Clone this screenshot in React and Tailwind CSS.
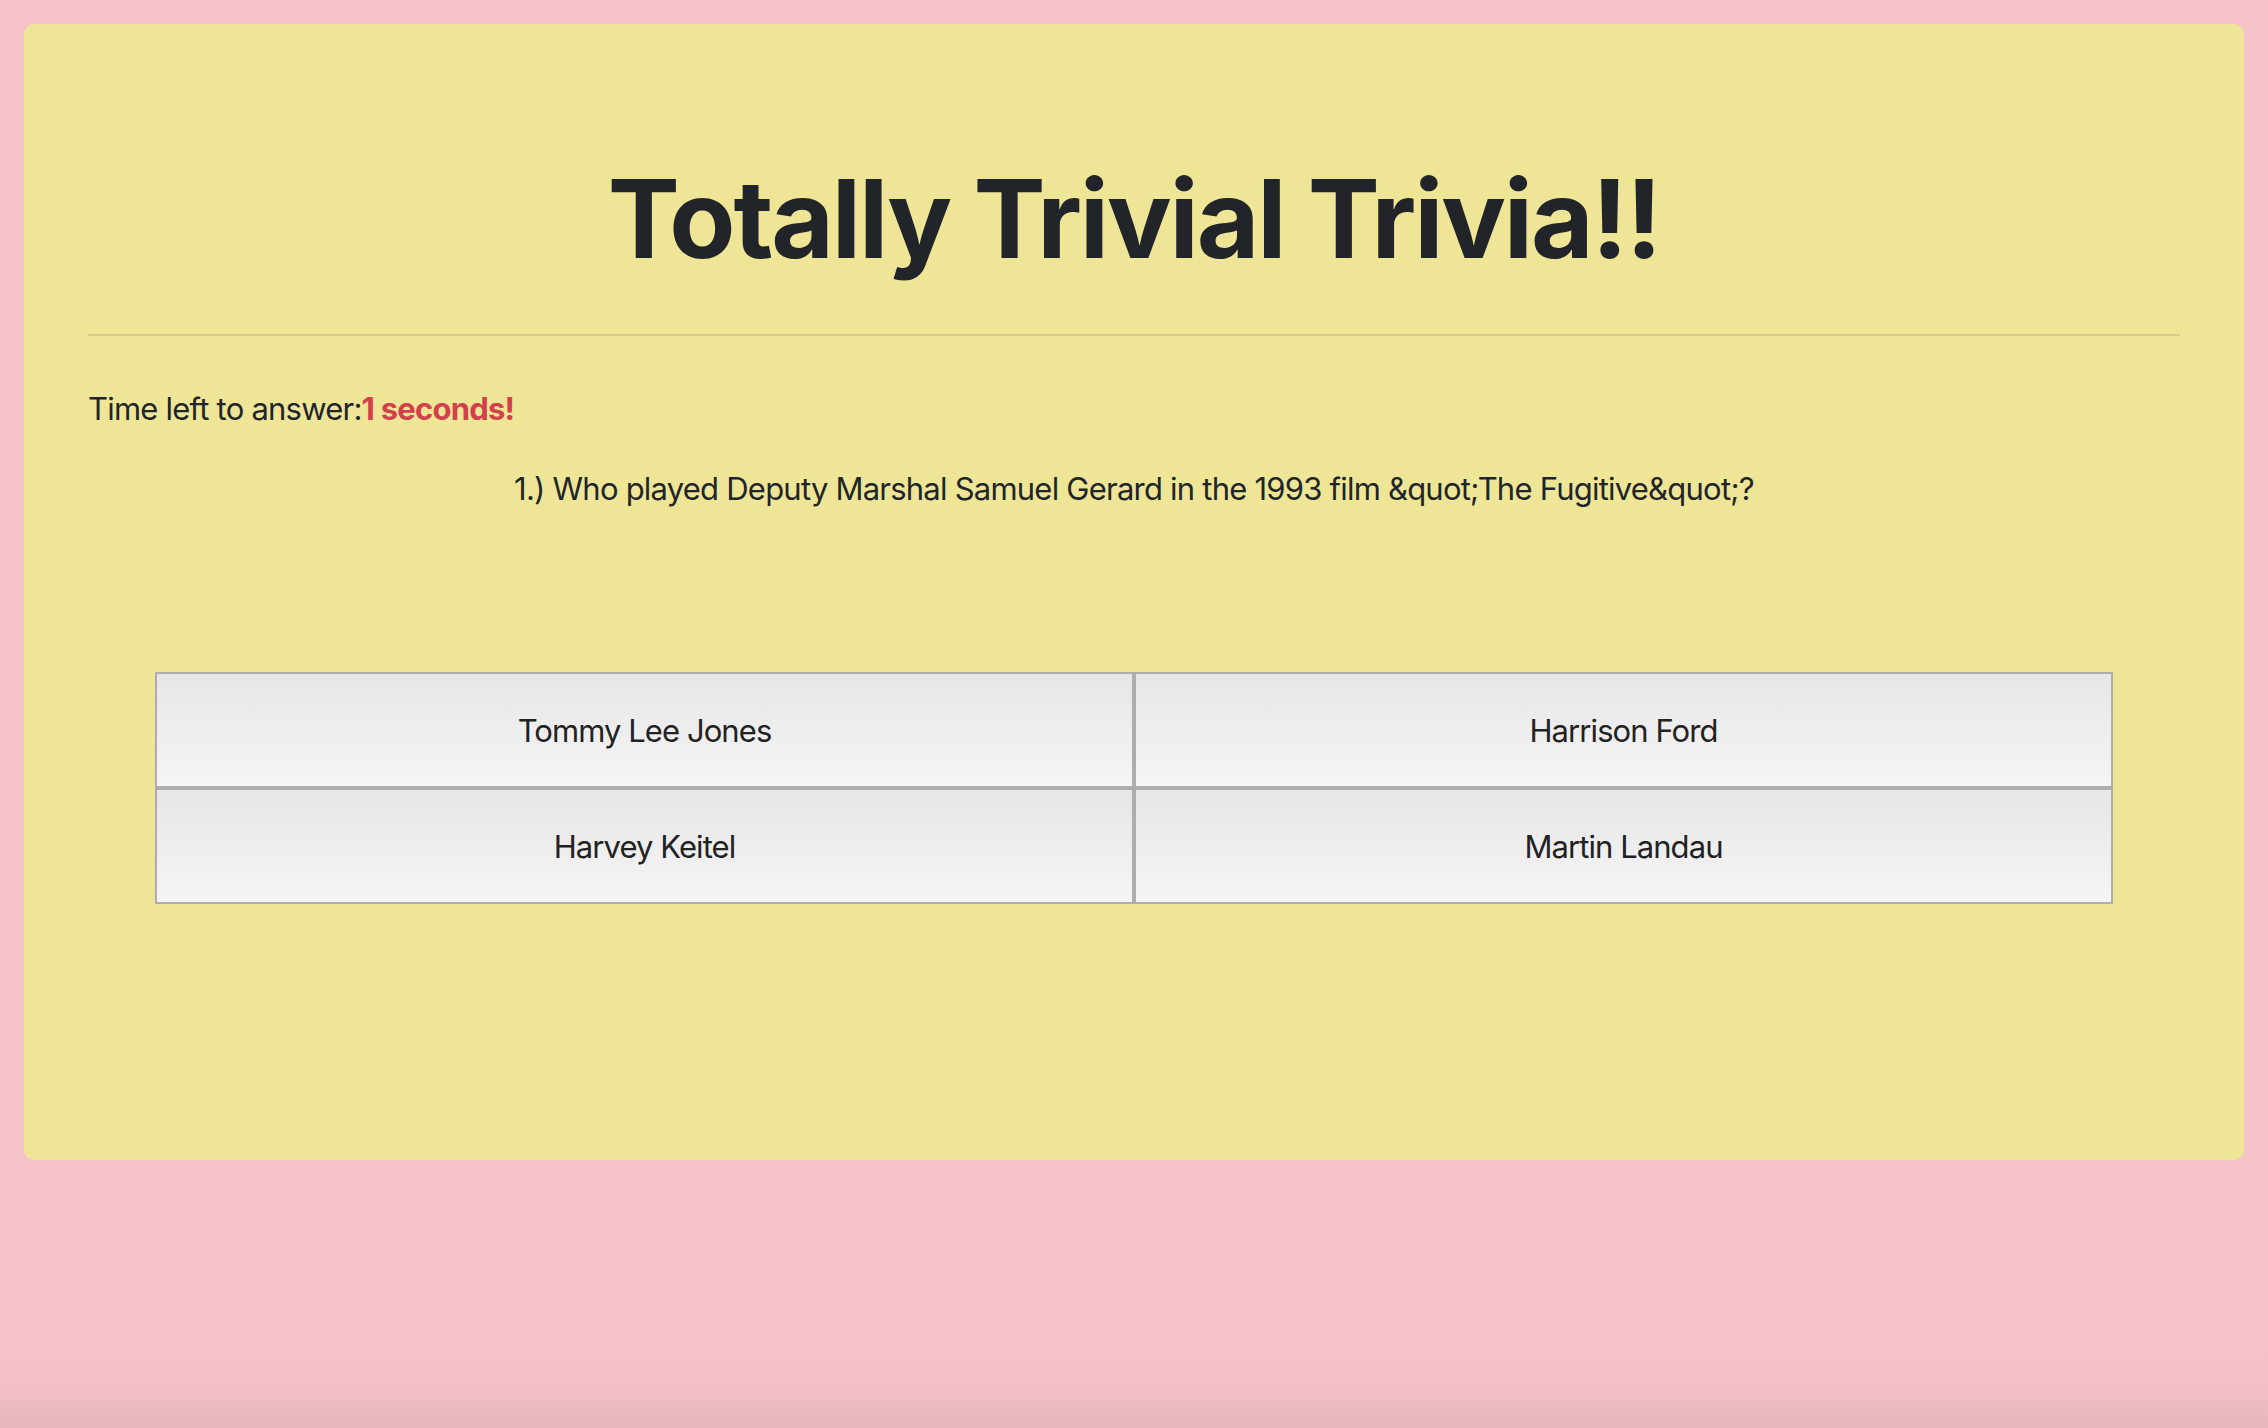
import React from 'react';

const answers = ['Tommy Lee Jones', 'Harrison Ford', 'Harvey Keitel', 'Martin Landau'];

export default function App() {
  return (
    <div
      className="h-[1428px] overflow-hidden pt-[24px] px-[24px] bg-[linear-gradient(to_bottom,#f6c3cb_0px,#f6c3cb_1340px,#f2bfc7_1390px,#e5b6bc_1428px)]"
      style={{ fontFamily: 'Inter, "Noto Sans", sans-serif' }}
    >
      <div className="bg-[#eee597] rounded-[10px] h-[1136px] px-[64px] pt-[130px] text-[#212529]">
        {/* Titre */}
        <h1 className="text-center text-[108px] leading-[1.2] font-bold tracking-[-0.02em] m-0">
          Totally Trivial Trivia!!
        </h1>
        <hr className="mt-[50px] mb-[50px] h-0 border-0 border-t-2 border-[#d6ce88]" />

        <p className="text-[31px] leading-[1.5] tracking-[-0.025em] mb-[34px]">
          Time left to answer:<span className="font-bold text-[#d3404d]">1 seconds!</span>
        </p>
        <p className="text-[31px] leading-[1.5] tracking-[-0.025em] text-center">
          1.) Who played Deputy Marshal Samuel Gerard in the 1993 film &amp;quot;The Fugitive&amp;quot;?
        </p>

        {/* Réponses */}
        <div className="mt-[159px] mx-[67px] grid grid-cols-2">
          {answers.map(a => (
            <button
              key={a}
              className="h-[116px] pt-[4px] flex items-center justify-center border-2 border-[#adadad] bg-[linear-gradient(to_bottom,#e6e6e6,#f5f5f5)] text-[31px] tracking-[-0.03em] text-[#222]"
              style={{ fontFamily: 'Inter, "Noto Sans", sans-serif' }}
            >
              {a}
            </button>
          ))}
        </div>
      </div>
    </div>
  );
}
